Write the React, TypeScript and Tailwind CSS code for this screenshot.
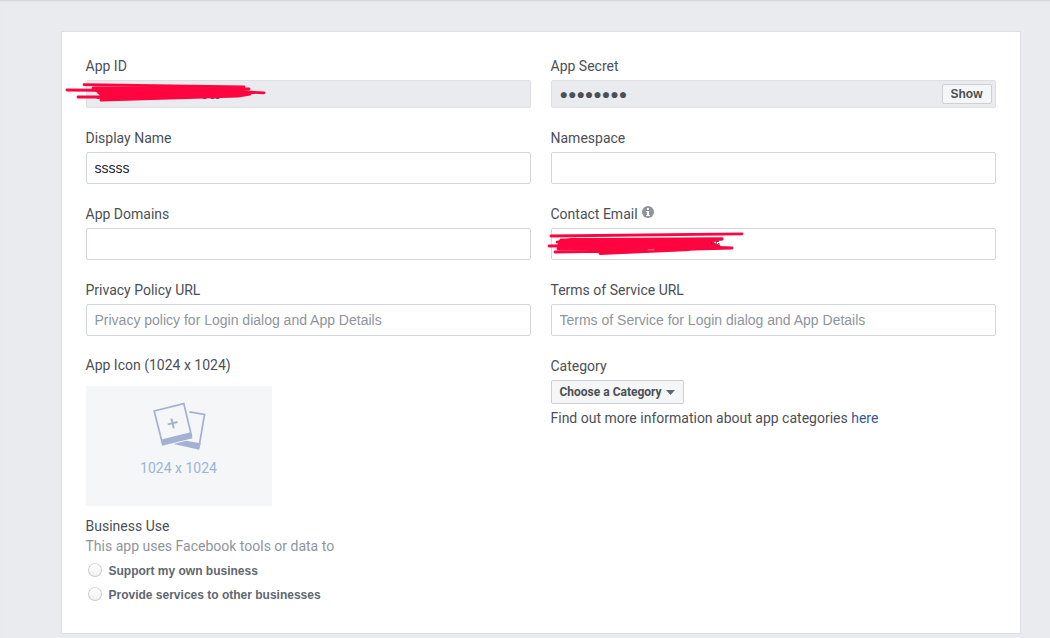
import type { ReactNode } from 'react';

const label = 'flex h-5 items-center text-sm leading-5 whitespace-nowrap text-[#4b4f56]';
const control = "h-8 w-full rounded-[2px] border border-[#d3d6db] bg-white px-2 font-['Liberation_Sans',sans-serif] text-sm text-[#1d2129] outline-none placeholder:text-[#90949c]";

function Field({ title, icon, children }: { title: string; icon?: ReactNode; children: ReactNode }) {
  return (
    <div className="relative flex flex-col gap-1">
      <div className={label}>{title}{icon}</div>
      {children}
    </div>
  );
}

function InfoIcon() {
  return (
    <svg className="mb-1 ml-1 size-3" viewBox="0 0 12 12">
      <circle cx="6" cy="6" r="6" fill="#90949c" />
      <path d="M5 2h2v2H5zM4 5h3v4h1v1H4V9h1V6H4z" fill="#fff" />
    </svg>
  );
}

function PhotosIcon() {
  return (
    <svg className="h-12 w-[54px] translate-x-px" viewBox="0 0 54 48" fill="none" stroke="#a5b0d5" strokeWidth="1.7">
      <path d="M36.3 9.8L51.5 12.4L46.5 42" />
      <path d="M20.5 42L33 38.7L47.7 41.3L46.2 47.8Z" fill="#a5b0d5" stroke="none" />
      <path d="M1.2 9L30.8 1.6L38.4 33.5L9.4 41.5Z" />
      <path d="M8.2 37.6L37.7 30.2L39.5 36.2L9.2 43.8Z" fill="#a5b0d5" stroke="none" />
      <path d="M14.7 22.4L24.5 20M18.4 16.4L20.8 26.2" strokeWidth="2" />
    </svg>
  );
}

function IdScribble() {
  return (
    <svg className="absolute top-[22px] -left-6 h-7 w-[210px]" viewBox="62 78 210 28" fill="none" stroke="#ff0540" strokeWidth="2.8" strokeLinecap="round" strokeLinejoin="round">
      <path d="M98 93.5l4 2M97 98.3h2M203 98.3h3M211 98.3h3M216 98.3h3" stroke="#343740" strokeWidth="1" />
      <path d="M93 88L228 88L229 93L200 95L101 98.5L101 94Z" fill="#ff0540" />
      <path d="M84 84.7L244 87M180 88L249 89M67 90L228 91.5L264 92.8M78 97L100 97L250 93.2M101 100.2L238 96.2L250 94" />
    </svg>
  );
}

function EmailScribble() {
  return (
    <svg className="absolute top-[26px] -left-1 h-7 w-[202px]" viewBox="547 230 202 28" fill="none" stroke="#ff0540" strokeWidth="2.8" strokeLinecap="round" strokeLinejoin="round">
      <path d="M561 240L722 239L709 242L719 246L700 248.5L558 249L559 244Z" fill="#ff0540" />
      <path d="M551 236L742 233.8M557 242L570 239.5L722 239M549 246L650 245L732 248M555 252L630 250.8L732 248M600 253.5L690 249.5" />
      <path d="M711.5 243h2.5M716.5 243.2v-1.8h2M718.5 243.5l1 .5" stroke="#343740" strokeWidth="1" />
      <path d="M715 242.7h1.5M561 238.3h6M648 249.8h6" stroke="#f7a6b7" strokeWidth=".7" />
    </svg>
  );
}

function Radio({ title }: { title: string }) {
  return (
    <label className="flex h-6 items-center gap-[7px] pl-[2px] font-['Liberation_Sans',sans-serif] text-xs font-bold text-[#606770]">
      <input type="radio" name="business-use" className="mb-[3px] size-[14px] appearance-none rounded-full border border-[#cccdd0] border-t-[#dcdde0] bg-linear-to-b from-white to-[#f1f1f2]" />
      {title}
    </label>
  );
}

export default function App() {
  return (
    <div className="h-[638px] overflow-hidden bg-[#e9ebee] pl-[60.5px] font-[Roboto,sans-serif] shadow-[inset_0_1px_0_#d5d7dc,inset_0_2px_1px_#e1e3e7]">
      <div className="h-[31px]" />
      <main className="grid h-[603px] w-[960px] grid-cols-[445px_445px] gap-x-5 border border-[#dddfe2] bg-white p-6">
        <section className="flex flex-col gap-5">
          <Field title="App ID">
            <div className="h-7 rounded-[2px] border border-[#dddfe2] bg-[#e9ebee]" />
            <IdScribble />
          </Field>
          <Field title="Display Name"><input className={control} defaultValue="sssss" /></Field>
          <Field title="App Domains"><input className={control} /></Field>
          <Field title="Privacy Policy URL">
            <input className={control} placeholder="Privacy policy for Login dialog and App Details" />
          </Field>
          <div className="-mt-px">
            <div className={label}>App Icon (1024 x 1024)</div>
            <div className="mt-[11px] flex h-[120px] w-[186px] flex-col items-center bg-[#f5f6f7] pt-4">
              <PhotosIcon />
              <span className="mt-2 text-sm leading-5 text-[#9cb4d8]">1024 x 1024</span>
            </div>
            <div className={`${label} mt-[10px]`}>Business Use</div>
            <div className="mb-[3px] text-sm leading-5 text-[#90949c]">This app uses Facebook tools or data to</div>
            <Radio title="Support my own business" />
            <Radio title="Provide services to other businesses" />
          </div>
        </section>
        <section className="flex flex-col gap-5">
          <Field title="App Secret">
            <div className="flex h-7 items-center justify-between rounded-[2px] border border-[#dddfe2] bg-[#e9ebee] pr-[3px] pl-2">
              <span className="-mt-px text-sm leading-5 text-[#4b4f56]">●●●●●●●●</span>
              <button className="h-5 w-[50px] rounded-[2px] border border-[#ced0d4] bg-[#f5f6f7] font-['Liberation_Sans',sans-serif] text-xs leading-[18px] font-bold text-[#4b4f56]">Show</button>
            </div>
          </Field>
          <Field title="Namespace"><input className={control} /></Field>
          <Field title="Contact Email" icon={<InfoIcon />}>
            <input className={control} />
            <EmailScribble />
          </Field>
          <Field title="Terms of Service URL">
            <input className={control} placeholder="Terms of Service for Login dialog and App Details" />
          </Field>
          <Field title="Category">
            <button className="flex h-6 w-[133px] items-center rounded-[2px] border border-[#ced0d4] bg-[#f5f6f7] pl-2 text-xs font-bold whitespace-nowrap text-[#4b4f56]">
              Choose a Category
              <svg className="mt-px ml-1 h-[5px] w-[9px]" viewBox="0 0 9 5"><path d="M0 0h9L4.5 5z" fill="#606770" /></svg>
            </button>
            <p className="text-sm leading-5 whitespace-nowrap text-[#4b4f56]">
              Find out more information about app categories <a className="text-[#365899]">here</a>
            </p>
          </Field>
        </section>
      </main>
    </div>
  );
}
